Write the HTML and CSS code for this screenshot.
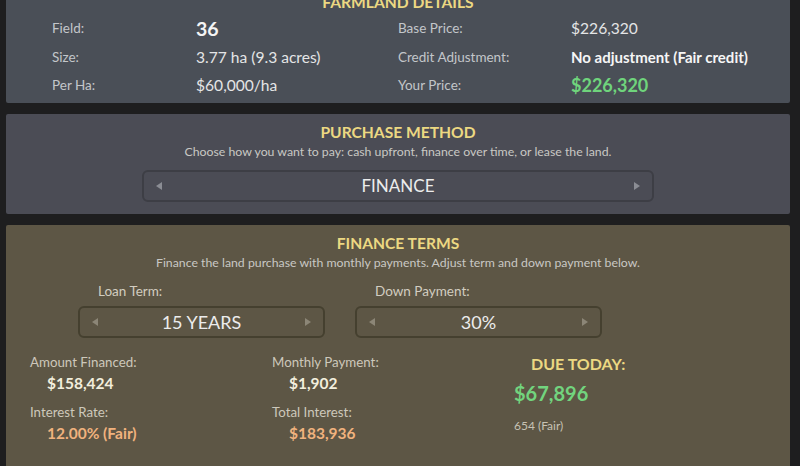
FILE: index.html
```html
<!DOCTYPE html>
<html>
<head>
<meta charset="utf-8">
<link rel="stylesheet" href="styles.css">
</head>
<body>
<div class="page">
  <section class="panel panel-details">
    <h2 class="title">FARMLAND DETAILS</h2>
    <div class="details">
      <span class="lbl">Field:</span><span class="val big">36</span>
      <span class="lbl">Base Price:</span><span class="val">$226,320</span>
      <span class="lbl">Size:</span><span class="val">3.77 ha (9.3 acres)</span>
      <span class="lbl">Credit Adjustment:</span><span class="val strong">No adjustment (Fair credit)</span>
      <span class="lbl">Per Ha:</span><span class="val">$60,000/ha</span>
      <span class="lbl">Your Price:</span><span class="val green">$226,320</span>
    </div>
  </section>

  <section class="panel panel-method">
    <h2 class="title">PURCHASE METHOD</h2>
    <p class="sub">Choose how you want to pay: cash upfront, finance over time, or lease the land.</p>
    <div class="selector wide">
      <span class="arrow left"></span>
      <span class="sel-text">FINANCE</span>
      <span class="arrow right"></span>
    </div>
  </section>

  <section class="panel panel-terms">
    <h2 class="title">FINANCE TERMS</h2>
    <p class="sub">Finance the land purchase with monthly payments. Adjust term and down payment below.</p>
    <div class="pickers">
      <div class="picker">
        <span class="picker-lbl">Loan Term:</span>
        <div class="selector">
          <span class="arrow left"></span>
          <span class="sel-text">15 YEARS</span>
          <span class="arrow right"></span>
        </div>
      </div>
      <div class="picker">
        <span class="picker-lbl">Down Payment:</span>
        <div class="selector">
          <span class="arrow left"></span>
          <span class="sel-text">30%</span>
          <span class="arrow right"></span>
        </div>
      </div>
    </div>
    <div class="stats">
      <div class="stat-col">
        <span class="s-lbl">Amount Financed:</span>
        <span class="s-val cream">$158,424</span>
        <span class="s-lbl">Interest Rate:</span>
        <span class="s-val orange">12.00% (Fair)</span>
      </div>
      <div class="stat-col">
        <span class="s-lbl">Monthly Payment:</span>
        <span class="s-val cream">$1,902</span>
        <span class="s-lbl">Total Interest:</span>
        <span class="s-val orange">$183,936</span>
      </div>
      <div class="stat-col due">
        <span class="due-lbl">DUE TODAY:</span>
        <span class="due-val">$67,896</span>
        <span class="due-note">654 (Fair)</span>
      </div>
    </div>
  </section>
</div>
</body>
</html>
```

FILE: styles.css
```css
* { box-sizing: border-box; margin: 0; padding: 0; }
html, body { background: #1e1e1f; overflow: hidden; }
body { font-family: Lato, "Open Sans", sans-serif; color: #e6e6e6; }

.page {
  display: flex;
  flex-direction: column;
  gap: 11px;
  padding: 0 10px 0 6px;
  margin-top: -19px;
}

.panel {
  border-radius: 2px;
  text-align: center;
}

.title {
  font-size: 15.6px;
  font-weight: 700;
  color: #ecd882;
  line-height: 18px;
}

.sub {
  font-size: 12.3px;
  color: #c9c8c4;
  line-height: 16px;
  margin-top: 3px;
}

/* details */
.panel-details {
  background: #4a4f57;
  padding: 12px 0 3px 0;
}
.details {
  display: grid;
  grid-template-columns: 144px 202px 173px auto;
  grid-auto-rows: 28.5px;
  align-items: center;
  text-align: left;
  padding-left: 46px;
  margin-top: 3px;
}
.lbl { font-size: 13.5px; color: #c3c6ca; }
.val { font-size: 15.6px; color: #e4e5e6; }
.val.big { font-size: 19.5px; font-weight: 700; color: #f4f4f4; }
.val.strong { font-weight: 700; font-size: 15px; color: #f6f6f6; }
.val.green { font-weight: 700; font-size: 18px; color: #6fd47c; }

/* method */
.panel-method {
  background: #4b4c55;
  padding: 9px 0 12px;
}
.selector {
  display: flex;
  align-items: center;
  justify-content: space-between;
  height: 32px;
  border: 2px solid #3d3e45;
  border-radius: 6px;
  padding: 0 12px;
}
.selector.wide {
  width: 512px;
  margin: 10px 0 0 136px;
}
.sel-text { font-size: 17px; color: #ececec; }
.arrow {
  width: 0; height: 0;
  border-top: 4px solid transparent;
  border-bottom: 4px solid transparent;
}
.arrow.left { border-right: 6px solid #8b8d94; }
.arrow.right { border-left: 6px solid #8b8d94; }

/* terms */
.panel-terms {
  background: #5d5645;
  padding: 9px 0 40px;
  min-height: 260px;
}
.panel-terms .selector { border-color: #45402f; width: 247px; }
.panel-terms .sel-text { font-size: 18px; }
.panel-terms .arrow.left { border-right-color: #8c8677; }
.panel-terms .arrow.right { border-left-color: #8c8677; }

.pickers {
  display: flex;
  gap: 30px;
  padding-left: 72px;
  margin-top: 12px;
  text-align: left;
}
.picker { display: flex; flex-direction: column; gap: 7px; }
.picker-lbl { font-size: 13.5px; color: #d2cdc0; padding-left: 20px; }

.stats {
  display: grid;
  grid-template-columns: 242px 242px auto;
  padding-left: 24px;
  margin-top: 15px;
  text-align: left;
}
.stat-col { display: flex; flex-direction: column; }
.s-lbl { font-size: 13.3px; color: #cdc8bb; line-height: 18px; }
.s-val { font-size: 15.5px; font-weight: 700; padding-left: 17px; line-height: 20px; margin: 2px 0 10px; }
.cream { color: #f2eedd; }
.orange { color: #efb46c; }
.s-val.orange:last-child { color: #f0b27e; }

.due { padding-top: 1px; }
.due-lbl { font-size: 16px; font-weight: 700; color: #ecd882; padding-left: 17px; line-height: 20px; }
.due-val { font-size: 20px; font-weight: 700; color: #72d47e; line-height: 26px; margin-top: 6px; }
.due-note { font-size: 12px; color: #c7c2b4; margin-top: 12px; }
```
